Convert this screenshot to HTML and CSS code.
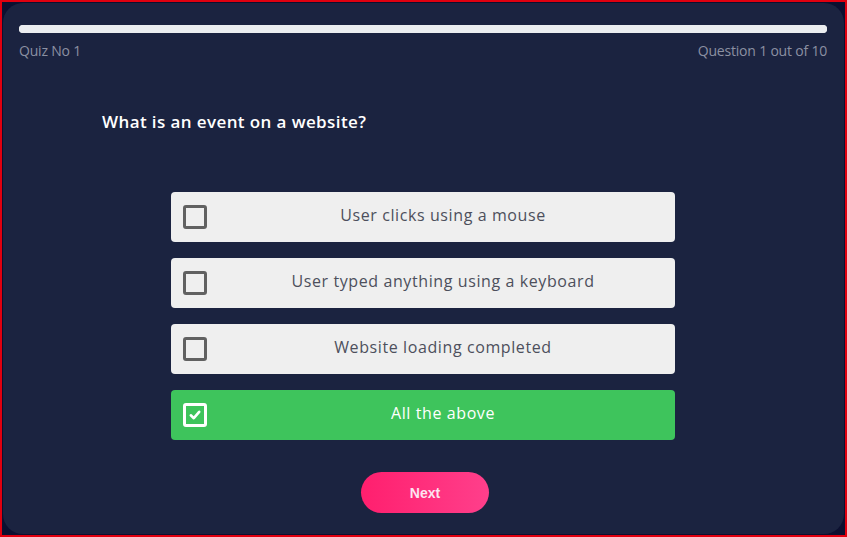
FILE: index.html
```html
<!DOCTYPE html>
<html lang="en">
<head>
<meta charset="utf-8">
<title>Quiz</title>
<link rel="stylesheet" href="styles.css">
</head>
<body>
<div class="frame">
  <main class="card">
    <div class="progress"><div class="progress-fill" style="width:100%"></div></div>
    <div class="meta">
      <span>Quiz No 1</span>
      <span>Question 1 out of 10</span>
    </div>
    <h1 class="question">What is an event on a website?</h1>
    <ul class="options">
      <li class="option"><span class="box"></span><span class="label">User clicks using a mouse</span></li>
      <li class="option"><span class="box"></span><span class="label">User typed anything using a keyboard</span></li>
      <li class="option"><span class="box"></span><span class="label">Website loading completed</span></li>
      <li class="option selected"><span class="box"><svg width="14" height="14" viewBox="0 0 14 14"><path d="M2.8 7.3 L5.8 10.2 L11.2 3.8" fill="none" stroke="#fff" stroke-width="2.6" stroke-linecap="round" stroke-linejoin="round"/></svg></span><span class="label">All the above</span></li>
    </ul>
    <div class="actions"><button class="next">Next</button></div>
  </main>
</div>
</body>
</html>
```
FILE: styles.css
```css
* { box-sizing: border-box; }
html, body { margin: 0; padding: 0; }
body {
  width: 847px;
  height: 537px;
  font-family: "Open Sans", "Liberation Sans", sans-serif;
}
.frame {
  width: 847px;
  height: 537px;
  border: 2px solid #e0000f;
  background: #0c1030;
  padding: 1px;
}
.card {
  height: 100%;
  background: #1b2340;
  border-radius: 20px;
  padding: 22px 17px 0 16px;
  display: flex;
  flex-direction: column;
}
.progress {
  height: 8px;
  background: #ebedf0;
  border-radius: 4px;
}
.progress-fill { height: 100%; border-radius: 4px; background: #ebedf0; }
.meta {
  display: flex;
  justify-content: space-between;
  margin-top: 8px;
  font-size: 14px;
  color: #8b90a2;
  letter-spacing: -0.2px;
}
.question {
  margin: 50px 0 0 83px;
  font-size: 17px;
  font-weight: 600;
  color: #ffffff;
  letter-spacing: 0.4px;
}
.options {
  list-style: none;
  margin: 59px 0 0 152px;
  padding: 0;
  width: 504px;
  display: flex;
  flex-direction: column;
  gap: 16px;
}
.option {
  height: 50px;
  background: #efefef;
  border-radius: 4px;
  display: flex;
  align-items: center;
  padding-left: 12px;
  color: #4d4f5c;
  font-size: 16px;
  letter-spacing: 0.6px;
}
.box {
  width: 24px;
  height: 24px;
  border: 3px solid #616161;
  border-radius: 3px;
  display: flex;
  align-items: center;
  justify-content: center;
  flex: none;
}
.label {
  flex: 1;
  text-align: center;
  padding: 0 0 5px 4px;
}
.option.selected {
  background: #3ec45c;
  color: #ffffff;
}
.option.selected .box { border-color: #ffffff; }
.actions {
  display: flex;
  justify-content: center;
  margin-top: 32px;
}
.next {
  width: 128px;
  height: 41px;
  border: none;
  border-radius: 21px;
  background: linear-gradient(90deg, #ff1f6e, #ff3f8b);
  color: #fde3f0;
  font-family: "Liberation Sans", Arial, sans-serif;
  font-weight: bold;
  font-size: 14px;
  margin-left: 4px;
}
```
